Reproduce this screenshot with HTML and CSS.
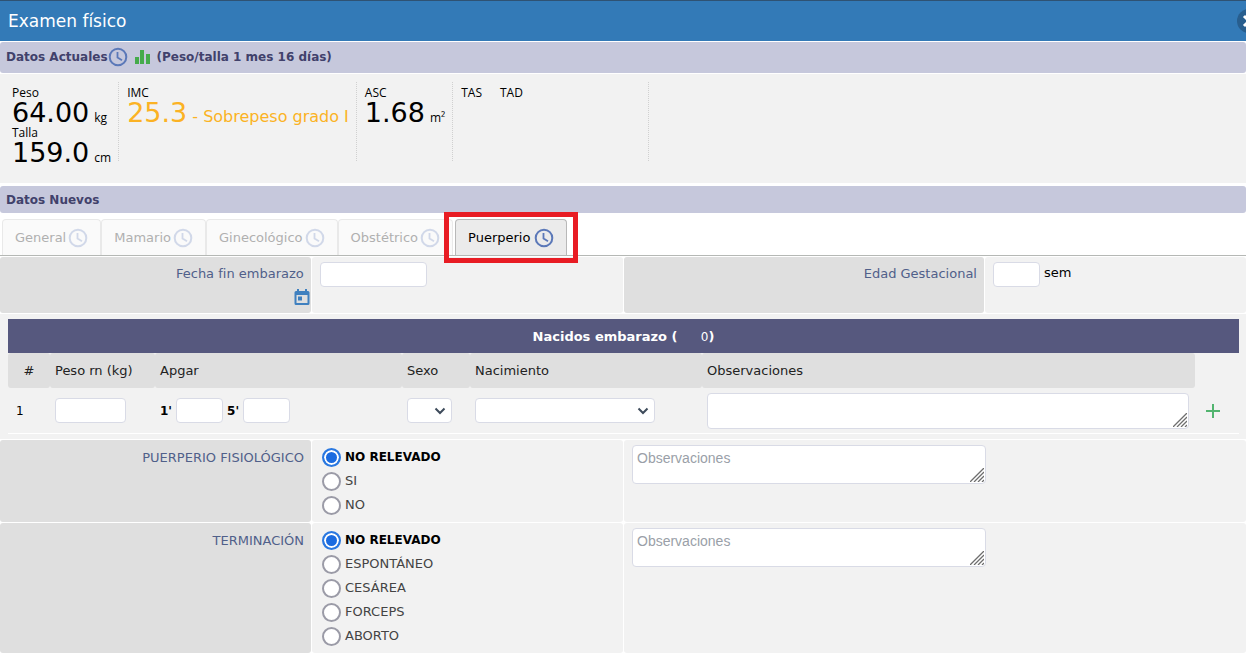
FILE: index.html
```
<!DOCTYPE html>
<html lang="es">
<head>
<meta charset="utf-8">
<title>Examen físico</title>
<meta name="viewport" content="width=device-width, initial-scale=1">
<link rel="stylesheet" href="styles.css">
</head>
<body>
<svg class="defs" aria-hidden="true">
  <symbol id="clock" viewBox="0 0 20 20">
    <circle cx="10" cy="10" r="8.300" fill="none" stroke="#5b78b8" stroke-width="2"/>
    <path d="M9.500 5v5.500l4.500 2.800" fill="none" stroke="#5b78b8" stroke-width="1.800"/>
  </symbol>
  <symbol id="grip" viewBox="0 0 14 14">
    <path d="M0 14 14 0M4 14 14 4M8 14l6-6M12 14l2-2" fill="none" stroke="#6e6e6e" stroke-width="1.300"/>
  </symbol>
  <symbol id="chevron" viewBox="0 0 12 8">
    <path d="m1.500 1.500 4.500 4.500 4.500-4.500" fill="none" stroke="#3e4b5b" stroke-width="2"/>
  </symbol>
</svg>

<header class="titlebar">
  <h1 class="titlebar-text">Examen físico</h1>
  <button class="close" type="button" aria-label="Cerrar">
    <svg viewBox="0 0 24 24" width="24" height="24"><circle cx="12" cy="12" r="12" fill="#285e8e"/><path d="m7 7 10 10M17 7 7 17" stroke="#fff" stroke-width="3"/></svg>
  </button>
</header>

<h2 class="section section-current">
  <span>Datos Actuales</span>
  <svg class="icon-clock"><use href="#clock"/></svg>
  <svg class="icon-bars" viewBox="0 0 16 16"><path d="M0 8h4v7H0zM5 1h4v14H5zM11 5h4v10h-4z" fill="#45ab4b"/></svg>
  <span>(Peso/talla 1 mes 16 días)</span>
</h2>

<section class="vitals">
  <div class="vital">
    <span class="cap">Peso</span>
    <span class="value">64.00<small class="unit">kg</small></span>
    <span class="cap">Talla</span>
    <span class="value">159.0<small class="unit">cm</small></span>
  </div>
  <div class="vital">
    <span class="cap">IMC</span>
    <span class="value warn">25.3<small class="note">- Sobrepeso grado I</small></span>
  </div>
  <div class="vital">
    <span class="cap">ASC</span>
    <span class="value">1.68<small class="unit">m²</small></span>
  </div>
  <div class="vital vital-ta">
    <span class="cap">TAS</span>
    <span class="cap">TAD</span>
  </div>
</section>

<h2 class="section section-new">Datos Nuevos</h2>

<nav class="tabs">
  <button class="tab" type="button">General<svg class="icon-clock"><use href="#clock"/></svg></button>
  <button class="tab" type="button">Mamario<svg class="icon-clock"><use href="#clock"/></svg></button>
  <button class="tab" type="button">Ginecológico<svg class="icon-clock"><use href="#clock"/></svg></button>
  <button class="tab" type="button">Obstétrico<svg class="icon-clock"><use href="#clock"/></svg></button>
  <button class="tab active" type="button">Puerperio<svg class="icon-clock"><use href="#clock"/></svg></button>
</nav>

<main class="form">
  <div class="row">
    <div class="label">
      <label for="fecha">Fecha fin embarazo</label>
      <button class="calendar" type="button" aria-label="Calendario">
        <svg viewBox="0 0 16 17" width="16" height="17"><path d="M3 0h2v2h6V0h2v2h1q1.500 0 1.500 1.500v11q0 1.500-1.500 1.500H2Q.500 16 .500 14.500v-11Q.500 2 2 2h1zM2.500 6v8h11V6z" fill="#3f80bf"/><path d="M4 7.500h4v4H4z" fill="#3f80bf"/></svg>
      </button>
    </div>
    <div class="cell"><input class="box w-date" id="fecha" type="text"></div>
    <div class="label"><label for="edad">Edad Gestacional</label></div>
    <div class="cell cell-age"><input class="box w-age" id="edad" type="text"><span>sem</span></div>
  </div>

  <section class="births">
    <h3 class="births-title">Nacidos embarazo (<span class="count">0</span>)</h3>
    <table class="births-table">
      <thead>
        <tr>
          <th class="c-num">#</th>
          <th class="c-weight">Peso rn (kg)</th>
          <th class="c-apgar">Apgar</th>
          <th class="c-sex">Sexo</th>
          <th class="c-birth">Nacimiento</th>
          <th>Observaciones</th>
          <td class="c-add"></td>
        </tr>
      </thead>
      <tbody>
        <tr>
          <td>1</td>
          <td><input class="box w-weight" type="text" aria-label="Peso rn (kg)"></td>
          <td>
            <div class="apgar">
              <label for="apgar1">1'</label><input class="box w-apgar" id="apgar1" type="text">
              <label for="apgar5">5'</label><input class="box w-apgar" id="apgar5" type="text">
            </div>
          </td>
          <td><div class="pick w-sex"><select class="box" aria-label="Sexo"><option></option></select><svg class="chevron"><use href="#chevron"/></svg></div></td>
          <td><div class="pick w-birth"><select class="box" aria-label="Nacimiento"><option></option></select><svg class="chevron"><use href="#chevron"/></svg></div></td>
          <td><div class="area"><textarea class="box area-small" aria-label="Observaciones"></textarea><svg class="grip"><use href="#grip"/></svg></div></td>
          <td class="c-add"><button class="add" type="button" aria-label="Agregar"><svg viewBox="0 0 14 14" width="14" height="14"><path d="M7 0v14M0 7h14" stroke="#52b46f" stroke-width="2"/></svg></button></td>
        </tr>
      </tbody>
    </table>
  </section>

  <div class="row row-wide">
    <div class="label"><span id="l-fis">PUERPERIO FISIOLÓGICO</span></div>
    <div class="cell options" role="radiogroup" aria-labelledby="l-fis">
      <label class="option"><input type="radio" name="fis" checked><span>NO RELEVADO</span></label>
      <label class="option"><input type="radio" name="fis"><span>SI</span></label>
      <label class="option"><input type="radio" name="fis"><span>NO</span></label>
    </div>
    <div class="cell"><div class="area w-notes"><textarea class="box" placeholder="Observaciones" aria-label="Observaciones"></textarea><svg class="grip"><use href="#grip"/></svg></div></div>
  </div>
  <div class="row row-wide">
    <div class="label"><span id="l-ter">TERMINACIÓN</span></div>
    <div class="cell options" role="radiogroup" aria-labelledby="l-ter">
      <label class="option"><input type="radio" name="ter" checked><span>NO RELEVADO</span></label>
      <label class="option"><input type="radio" name="ter"><span>ESPONTÁNEO</span></label>
      <label class="option"><input type="radio" name="ter"><span>CESÁREA</span></label>
      <label class="option"><input type="radio" name="ter"><span>FORCEPS</span></label>
      <label class="option"><input type="radio" name="ter"><span>ABORTO</span></label>
    </div>
    <div class="cell"><div class="area w-notes"><textarea class="box" placeholder="Observaciones" aria-label="Observaciones"></textarea><svg class="grip"><use href="#grip"/></svg></div></div>
  </div>
</main>
</body>
</html>
```
FILE: styles.css
```
* { box-sizing: border-box; }

body {
  margin: 0;
  background: #fff;
  color: #000;
  font: 13px/16px Verdana, "DejaVu Sans", sans-serif;
  overflow-x: hidden;
}

h1, h2, h3 { margin: 0; }

button {
  padding: 0;
  border: 0;
  background: none;
  font: inherit;
  color: inherit;
}

svg { display: block; flex: none; }
.defs { position: absolute; width: 0; height: 0; }
.icon-clock { width: 20px; height: 20px; }

/* Title bar */
.titlebar {
  display: flex;
  align-items: center;
  justify-content: space-between;
  height: 41px;
  padding-left: 8px;
  border-top: 1px solid #2f5273;
  background: #337ab7;
  color: #fff;
  overflow: hidden;
}
.titlebar-text { font-size: 17px; font-weight: normal; line-height: 20px; }
.close { margin-right: -15px; }

/* Section headings */
.section {
  display: flex;
  align-items: center;
  padding: 0 6px;
  border-radius: 3px;
  background: #c6c8dc;
  color: #41416b;
  font-size: 12px;
  font-weight: bold;
}
.section-current { height: 31px; margin-top: 1px; padding-bottom: 2px; }
.section-current .icon-clock { margin-right: 7px; }
.icon-bars { width: 16px; height: 16px; margin-right: 6px; }
.section-new { height: 27px; }

/* Current measurements */
.vitals {
  display: flex;
  height: 109px;
  margin: 1px 0 3px;
  padding: 8px 4px 22px;
  background: #f2f2f2;
}
.vital {
  display: flex;
  flex-direction: column;
  padding: 4px 7px 0 8px;
  border-right: 1px dotted #d0d0d0;
}
.cap { flex: none; font: 12px/14px "Open Sans", sans-serif; }
.value {
  display: flex;
  flex: none;
  align-items: baseline;
  gap: 5px;
  height: 26px;
  font-size: 27px;
  line-height: 26px;
  white-space: nowrap;
}
.unit { font: 12px/14px "Open Sans", sans-serif; }
.note { font-size: 16px; }
.warn { color: #fbb224; }
.vital-ta { flex-direction: row; gap: 18px; width: 196px; }

/* Tabs */
.tabs {
  display: flex;
  margin-top: 6px;
  padding-left: 2px;
  border-bottom: 1px solid #b5b8b5;
}
.tab {
  display: flex;
  align-items: center;
  gap: 2px;
  height: 36px;
  padding: 0 12px;
  border: 1px solid #e9e9e9;
  border-bottom: 0;
  border-radius: 4px 4px 0 0;
  background: #fafafa;
  color: #b0b0b0;
}
.tab .icon-clock { opacity: 0.25; }
.tab.active {
  position: relative;
  gap: 4px;
  margin-left: 2px;
  border-color: #b8b8b8;
  background: #ebebeb;
  color: #000;
}
.tab.active .icon-clock { opacity: 1; }
.tab.active::after {
  content: "";
  position: absolute;
  inset: -8px -12px;
  border: 5px solid #e81c24;
}

/* Form rows */
.form { padding-top: 1px; }
.row {
  display: grid;
  grid-template-columns: 25fr 25fr 29fr 21fr;
  gap: 1px;
  min-height: 56px;
}
.row-wide { grid-template-columns: 1fr 1fr 2fr; margin-bottom: 1px; }
.label, .cell { border-radius: 3px; }
.label {
  display: flex;
  flex-direction: column;
  align-items: flex-end;
  padding: 9px 7px 6px;
  background: #dfdfdf;
  color: #50608a;
}
.row-wide .label { padding-top: 10px; }
.calendar { margin: 7px -6px 0 0; }
.cell { padding: 5px 8px; background: #f2f2f2; }
.cell-age { display: flex; align-items: flex-start; gap: 4px; }
.cell-age span { padding-top: 3px; }

.box {
  height: 25px;
  border: 1px solid #d9dbe6;
  border-radius: 4px;
  background: #fff;
  font: 14px/18px "Liberation Sans", sans-serif;
}
.w-date { width: 107px; }
.w-age { width: 47px; }
.w-weight { width: 71px; }
.w-apgar { width: 47px; }
.w-sex { width: 45px; }
.w-birth { width: 180px; }
.w-notes { width: 354px; }

.pick, .area { position: relative; }
.pick .box { display: block; width: 100%; appearance: none; }
.chevron {
  position: absolute;
  right: 6px;
  top: 9px;
  width: 12px;
  height: 8px;
  pointer-events: none;
}
.area .box {
  display: block;
  width: 100%;
  height: 39px;
  padding: 3px 4px;
  resize: none;
}
.area .area-small { height: 36px; }
.box::placeholder { color: #9a9fa8; }
.grip {
  position: absolute;
  right: 2px;
  bottom: 2px;
  width: 14px;
  height: 14px;
}

/* Newborn table */
.births {
  margin: 1px 0;
  padding: 5px 7px 5px 8px;
  background: #f2f2f2;
}
.births-title {
  padding: 10px 0 8px;
  background: #56587e;
  color: #fff;
  font-size: 13px;
  line-height: 16px;
  text-align: center;
}
.count {
  display: inline-block;
  width: 31px;
  font-size: 12px;
  font-weight: normal;
  text-align: right;
}
.births-table {
  width: 100%;
  border-collapse: separate;
  border-spacing: 0;
  table-layout: fixed;
}
.births-table th {
  height: 35px;
  padding: 0 5px;
  background: #dfdfdf;
  border-radius: 3px;
  color: #222;
  font-weight: normal;
  text-align: left;
}
.births-table tbody td {
  height: 46px;
  padding: 0 6px 0 5px;
  border-bottom: 1px solid #fff;
}
.births-table tbody td:first-child { padding-left: 8px; font-size: 12px; }
.births-table .c-num { width: 42px; text-align: center; }
.c-weight { width: 105px; }
.c-apgar { width: 247px; }
.c-sex { width: 68px; }
.c-birth { width: 232px; }
.c-add { width: 44px; }
.births-table tbody .c-add { padding: 0 0 0 11px; }
.add { display: block; }
.apgar { display: flex; align-items: center; gap: 4px; font-size: 12px; font-weight: bold; }

/* Radio lists */
.options { display: flex; flex-direction: column; padding-left: 10px; }
.option {
  display: flex;
  align-items: center;
  gap: 4px;
  height: 24px;
  color: #444;
}
.option input {
  flex: none;
  appearance: none;
  width: 19px;
  height: 19px;
  margin: 0;
  border: 2px solid #9b9ba7;
  border-radius: 50%;
  background: #fff;
}
.option input:checked {
  border-color: #2a78e0;
  background: #1b6be0;
  box-shadow: inset 0 0 0 2px #fff;
}
.option input:checked + span { color: #000; font-size: 12px; font-weight: bold; }
```
